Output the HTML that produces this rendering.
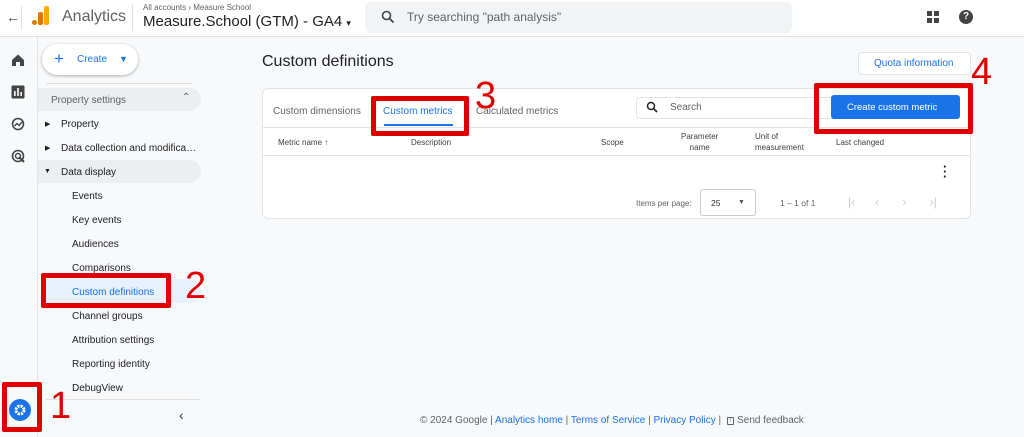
<!DOCTYPE html>
<html><head><meta charset="utf-8"><style>
*{box-sizing:border-box;margin:0;padding:0}
body{width:1024px;height:437px;overflow:hidden;background:#f8f9fa;font-family:"Liberation Sans",sans-serif;color:#202124;position:relative}
.a{position:absolute}
.t{position:absolute;white-space:nowrap}
.red{position:absolute;border:5px solid #e00000;border-radius:2px}
.num{position:absolute;color:#e00000;font-size:38px;line-height:1;font-family:"Liberation Sans",sans-serif;text-shadow:0 0 2px #fff}
.nav{font-size:10px;color:#202124}
.th{font-size:8px;color:#3c4043;text-align:center;line-height:11px}
</style></head><body>
<div class="a" style="left:0;top:0;width:1024px;height:37px;background:#fff;border-bottom:1px solid #e3e3e3"></div>
<div class="t" style="left:6px;top:9px;font-size:14px;color:#444">←</div>
<div class="a" style="left:21px;top:6px;width:1px;height:24px;background:#e0e0e0"></div>
<div class="a" style="left:32px;top:20px;width:5px;height:5px;border-radius:3px;background:#e37400"></div>
<div class="a" style="left:38px;top:12px;width:5px;height:13px;border-radius:2px;background:#e37400"></div>
<div class="a" style="left:44px;top:6px;width:5px;height:19px;border-radius:2px;background:#f9ab00"></div>
<div class="t" style="left:62px;top:8px;font-size:16px;color:#5f6368">Analytics</div>
<div class="a" style="left:132px;top:5px;width:1px;height:26px;background:#e0e0e0"></div>
<div class="t" style="left:143px;top:3px;font-size:8px;color:#5f6368">All accounts › Measure School</div>
<div class="t" style="left:143px;top:13px;font-size:15px;color:#202124">Measure.School (GTM) - GA4 <span style="font-size:9px">▾</span></div>
<div class="a" style="left:365px;top:2px;width:427px;height:31px;background:#f1f3f4;border-radius:6px"></div>
<svg class="a" style="left:381px;top:10px" width="14" height="14" viewBox="0 0 14 14"><circle cx="5.5" cy="5.5" r="4" fill="none" stroke="#444" stroke-width="1.6"/><path d="M8.5 8.5L12.5 12.5" stroke="#444" stroke-width="1.8"/></svg>
<div class="t" style="left:407px;top:10px;font-size:12px;color:#5f6368">Try searching "path analysis"</div>
<svg class="a" style="left:927px;top:11px" width="13" height="13"><rect x="0" y="0" width="5" height="5" fill="#444"/><rect x="7" y="0" width="5" height="5" fill="#444"/><rect x="0" y="7" width="5" height="5" fill="#444"/><rect x="7" y="7" width="5" height="5" fill="#444"/></svg>
<div class="a" style="left:959px;top:10px;width:14px;height:14px;border-radius:7px;background:#444;color:#fff;font-size:10px;font-weight:bold;text-align:center;line-height:14px">?</div>
<div class="a" style="left:37px;top:37px;width:1px;height:400px;background:#e3e3e3"></div>
<svg class="a" style="left:11px;top:53px" width="14" height="14"><path d="M1 7L7 1.5L13 7V13H9V9H5V13H1Z" fill="#444"/></svg>
<svg class="a" style="left:11px;top:85px" width="14" height="14"><rect x="0.5" y="0.5" width="13" height="13" rx="1" fill="#444"/><rect x="3" y="6" width="1.6" height="5" fill="#fff"/><rect x="6.2" y="3" width="1.6" height="8" fill="#fff"/><rect x="9.4" y="7" width="1.6" height="4" fill="#fff"/></svg>
<svg class="a" style="left:11px;top:117px" width="14" height="14"><circle cx="7" cy="7" r="5.5" fill="none" stroke="#444" stroke-width="1.6"/><path d="M3.5 9L6 6.5L8 8.5L11 5" fill="none" stroke="#444" stroke-width="1.4"/></svg>
<svg class="a" style="left:11px;top:149px" width="15" height="15"><circle cx="7" cy="7" r="5.5" fill="none" stroke="#444" stroke-width="1.6"/><circle cx="7" cy="7" r="2.5" fill="none" stroke="#444" stroke-width="1.4"/><path d="M8 8L13 13" stroke="#444" stroke-width="2"/></svg>
<div class="a" style="left:9px;top:399px;width:22px;height:22px;border-radius:11px;background:#1a73e8"></div>
<svg class="a" style="left:13px;top:403px" width="14" height="14" viewBox="0 0 14 14"><circle cx="7" cy="7" r="4" fill="none" stroke="#fff" stroke-width="3" stroke-dasharray="2.2 1"/><circle cx="7" cy="7" r="1.4" fill="#1a73e8"/></svg>
<div class="a" style="left:42px;top:44px;width:96px;height:31px;background:#fff;border-radius:16px;box-shadow:0 1px 3px rgba(0,0,0,.3)"></div>
<div class="t" style="left:54px;top:49px;font-size:17px;color:#1a73e8">+</div>
<div class="t" style="left:77px;top:54px;font-size:10px;color:#1a73e8">Create</div>
<div class="t" style="left:119px;top:54px;font-size:9px;color:#1a73e8">▼</div>
<div class="a" style="left:46px;top:83px;width:147px;height:1px;background:#e0e0e0"></div>
<div class="a" style="left:38px;top:88px;width:163px;height:23px;background:#eceef0;border-radius:0 12px 12px 0"></div>
<div class="t nav" style="left:51px;top:95px;color:#5f6368">Property settings</div>
<div class="t" style="left:182px;top:92px;font-size:10px;color:#5f6368">⌃</div>
<div class="t" style="left:45px;top:120px;font-size:7px">▶</div>
<div class="t nav" style="left:61px;top:119px">Property</div>
<div class="t" style="left:45px;top:144px;font-size:7px">▶</div>
<div class="t nav" style="left:61px;top:143px">Data collection and modifica…</div>
<div class="a" style="left:38px;top:160px;width:163px;height:23px;background:#eceef0;border-radius:0 12px 12px 0"></div>
<div class="t" style="left:44px;top:168px;font-size:7px">▼</div>
<div class="t nav" style="left:61px;top:167px">Data display</div>
<div class="t nav" style="left:72px;top:191px">Events</div>
<div class="t nav" style="left:72px;top:215px">Key events</div>
<div class="t nav" style="left:72px;top:239px">Audiences</div>
<div class="t nav" style="left:72px;top:263px">Comparisons</div>
<div class="a" style="left:46px;top:279px;width:155px;height:24px;background:#e8f0fe;border-radius:0 12px 12px 0"></div>
<div class="t nav" style="left:72px;top:287px;color:#1a73e8">Custom definitions</div>
<div class="t nav" style="left:72px;top:311px">Channel groups</div>
<div class="t nav" style="left:72px;top:335px">Attribution settings</div>
<div class="t nav" style="left:72px;top:359px">Reporting identity</div>
<div class="t nav" style="left:72px;top:383px">DebugView</div>
<div class="a" style="left:46px;top:399px;width:154px;height:1px;background:#e0e0e0"></div>
<div class="t" style="left:179px;top:407px;font-size:14px;color:#333">‹</div>
<div class="t" style="left:262px;top:53px;font-size:16px;color:#202124">Custom definitions</div>
<div class="a" style="left:858px;top:52px;width:113px;height:23px;background:#fff;border:1px solid #e3e3e3;border-radius:4px"></div>
<div class="t" style="left:874px;top:58px;font-size:10px;color:#1a73e8">Quota information</div>
<div class="a" style="left:262px;top:88px;width:709px;height:131px;background:#fff;border:1px solid #e3e3e3;border-radius:6px"></div>
<div class="t" style="left:273px;top:106px;font-size:10px;color:#5f6368">Custom dimensions</div>
<div class="t" style="left:383px;top:106px;font-size:10px;color:#1a73e8">Custom metrics</div>
<div class="a" style="left:384px;top:124px;width:69px;height:2px;background:#1a73e8"></div>
<div class="t" style="left:476px;top:106px;font-size:10px;color:#5f6368">Calculated metrics</div>
<div class="a" style="left:636px;top:97px;width:200px;height:22px;border:1px solid #e3e3e3;border-radius:4px"></div>
<svg class="a" style="left:646px;top:101px" width="12" height="12"><circle cx="5" cy="5" r="3.5" fill="none" stroke="#202124" stroke-width="1.5"/><path d="M7.5 7.5L11 11" stroke="#202124" stroke-width="1.7"/></svg>
<div class="t" style="left:670px;top:102px;font-size:10px;color:#5f6368">Search</div>
<div class="a" style="left:831px;top:95px;width:129px;height:24px;background:#1a73e8;border-radius:3px"></div>
<div class="t" style="left:847px;top:102px;font-size:9.5px;color:#fff">Create custom metric</div>
<div class="a" style="left:263px;top:127px;width:707px;height:1px;background:#e3e3e3"></div>
<div class="t th" style="left:278px;top:137px">Metric name <b>↑</b></div>
<div class="t th" style="left:411px;top:137px">Description</div>
<div class="t th" style="left:601px;top:137px">Scope</div>
<div class="t th" style="left:681px;top:131px">Parameter<br>name</div>
<div class="t th" style="left:755px;top:131px;text-align:left">Unit of<br>measurement</div>
<div class="t th" style="left:836px;top:137px">Last changed</div>
<div class="a" style="left:263px;top:155px;width:707px;height:1px;background:#e3e3e3"></div>
<div class="t" style="left:943px;top:164px;font-size:13px;font-weight:bold;line-height:5px">·<br>·<br>·</div>
<div class="t" style="left:636px;top:199px;font-size:8px;color:#5f6368">Items per page:</div>
<div class="a" style="left:700px;top:189px;width:56px;height:27px;border:1px solid #ccc;border-radius:3px"></div>
<div class="t" style="left:711px;top:198px;font-size:8.5px;color:#333">25</div>
<div class="t" style="left:738px;top:199px;font-size:7px;color:#555">▼</div>
<div class="t" style="left:780px;top:198px;font-size:8.5px;color:#5f6368">1 – 1 of 1</div>
<div class="t" style="left:848px;top:195px;font-size:12px;color:#ccc">|‹&nbsp;&nbsp;&nbsp;&nbsp;&nbsp;&nbsp;‹&nbsp;&nbsp;&nbsp;&nbsp;&nbsp;&nbsp;&nbsp;›&nbsp;&nbsp;&nbsp;&nbsp;&nbsp;&nbsp;&nbsp;›|</div>
<div class="t" style="left:420px;top:415px;font-size:10px;color:#5f6368">© 2024 Google | <span style="color:#1a73e8">Analytics home</span> | <span style="color:#1a73e8">Terms of Service</span> | <span style="color:#1a73e8">Privacy Policy</span> |&nbsp; <span style="border:1.3px solid #5f6368;border-radius:1px;font-size:6px;padding:0 2px;vertical-align:1px">!</span> Send feedback</div>
<div class="red" style="left:2px;top:382px;width:40px;height:50px"></div>
<div class="red" style="left:41px;top:273px;width:130px;height:35px"></div>
<div class="red" style="left:371px;top:96px;width:98px;height:40px"></div>
<div class="red" style="left:814px;top:83px;width:159px;height:51px"></div>
<div class="num" style="left:50px;top:387px">1</div>
<div class="num" style="left:185px;top:267px">2</div>
<div class="num" style="left:475px;top:77px">3</div>
<div class="num" style="left:971px;top:53px">4</div>
</body></html>
